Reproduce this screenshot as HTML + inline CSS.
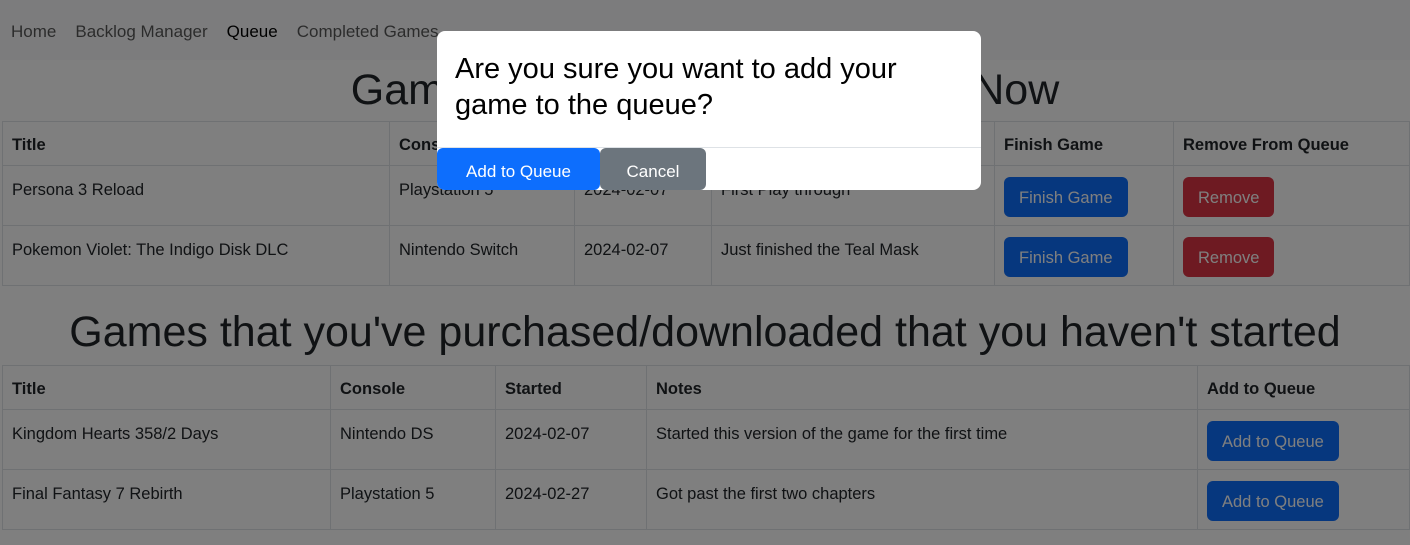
<!DOCTYPE html>
<html><head><meta charset="utf-8"><style>
*{box-sizing:border-box}
body{margin:0;width:1410px;height:545px;overflow:hidden;font-family:"Liberation Sans",sans-serif;color:#212529;background:#fff;position:relative}
nav{height:60px;background:#f8f9fa;padding:4px 11px 0;display:flex;align-items:center;gap:19px;font-size:17px;color:rgba(0,0,0,.65)}
nav .a{color:#000}
h1{margin:0;text-align:center;font-weight:400;font-size:43px;line-height:60px}
table{border-collapse:collapse;margin-left:2px;width:1408px;font-size:16.5px}
td,th{border:1px solid #dee2e6;padding:0 9px;text-align:left}
th{height:44px;vertical-align:middle;padding-top:3px}
td{height:60px;vertical-align:top;padding-top:12px;line-height:24px}
.btn{display:inline-block;vertical-align:top;margin-top:-1px;color:#fff;border-radius:6px;padding:0 15px;height:40px;line-height:42px;font-size:16.5px}
.b{background:#0d6efd}.r{background:#dc3545}
.ov{position:absolute;left:0;top:0;width:1410px;height:545px;background:rgba(0,0,0,.5)}
.modal{position:absolute;left:437px;top:31px;width:544px;height:159px;background:#fff;border-radius:8px;overflow:hidden}
.modal p{margin:0;padding:20px 18px 0;font-size:29px;line-height:36px;color:#000;height:116px}
.modal hr{margin:0;border:0;border-top:1px solid #dee2e6}
.mb{position:absolute;top:117px;height:42px;line-height:48px;color:#fff;font-size:17px;text-align:center;border-radius:6px}
</style></head><body>
<nav><span>Home</span><span>Backlog Manager</span><span class="a">Queue</span><span>Completed Games</span></nav>
<h1 style="margin-top:0">Games that you're playing Right Now</h1>
<table style="margin-top:1px">
<tr><th style="width:387px">Title</th><th style="width:185px">Console</th><th style="width:137px">Started</th><th style="width:283px">Notes</th><th style="width:179px">Finish Game</th><th>Remove From Queue</th></tr>
<tr><td>Persona 3 Reload</td><td>Playstation 5</td><td>2024-02-07</td><td>First Play through</td><td><span class="btn b">Finish Game</span></td><td><span class="btn r">Remove</span></td></tr>
<tr><td>Pokemon Violet: The Indigo Disk DLC</td><td>Nintendo Switch</td><td>2024-02-07</td><td>Just finished the Teal Mask</td><td><span class="btn b">Finish Game</span></td><td><span class="btn r">Remove</span></td></tr>
</table>
<h1 style="margin-top:16px;margin-bottom:3px">Games that you've purchased/downloaded that you haven't started</h1>
<table>
<tr><th style="width:328px">Title</th><th style="width:165px">Console</th><th style="width:151px">Started</th><th style="width:551px">Notes</th><th>Add to Queue</th></tr>
<tr><td>Kingdom Hearts 358/2 Days</td><td>Nintendo DS</td><td>2024-02-07</td><td>Started this version of the game for the first time</td><td><span class="btn b">Add to Queue</span></td></tr>
<tr><td>Final Fantasy 7 Rebirth</td><td>Playstation 5</td><td>2024-02-27</td><td>Got past the first two chapters</td><td><span class="btn b">Add to Queue</span></td></tr>
</table>
<div class="ov"></div>
<div class="modal"><p>Are you sure you want to add your game to the queue?</p><hr>
<div class="mb" style="left:0;width:163px;background:#0d6efd">Add to Queue</div>
<div class="mb" style="left:163px;width:106px;background:#6c757d">Cancel</div>
</div>
</body></html>
